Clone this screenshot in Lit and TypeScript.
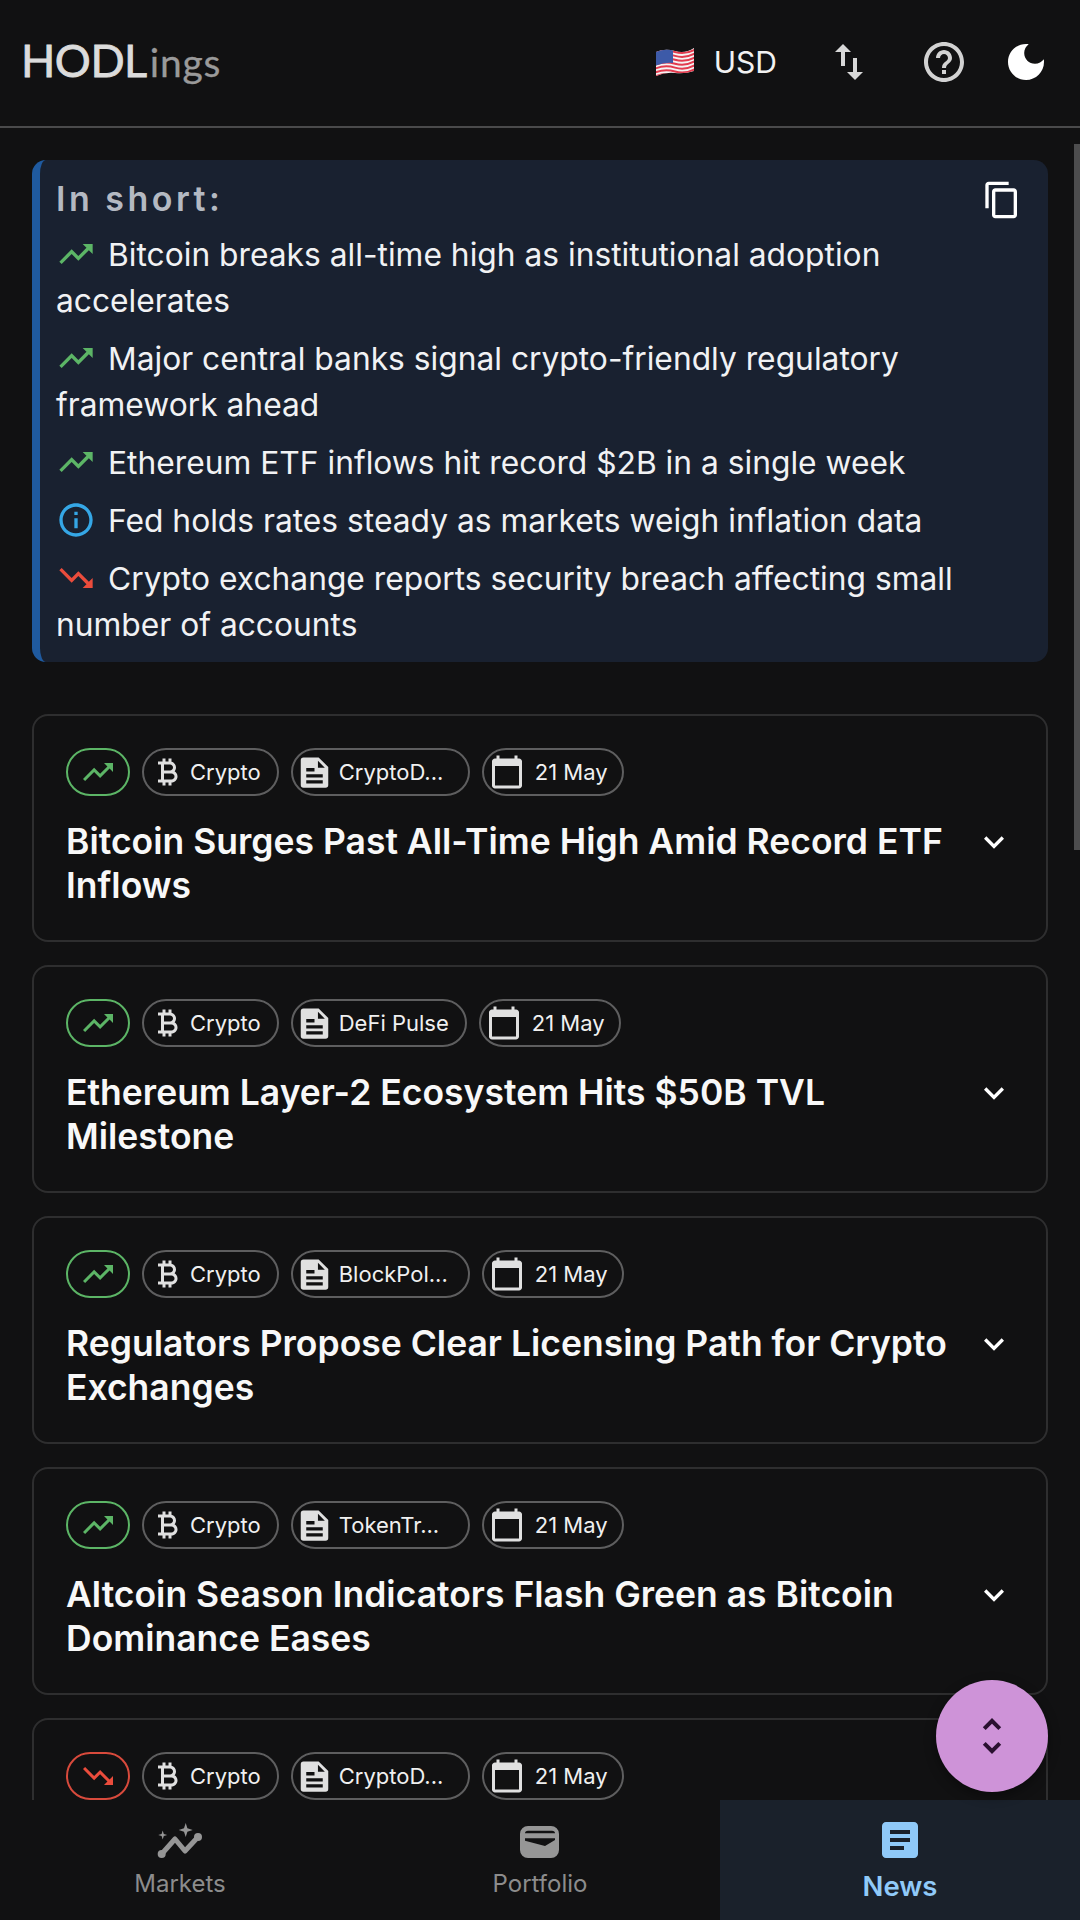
import { LitElement, css, html, svg } from 'lit';
import { customElement } from 'lit/decorators.js';

const paths = {
  up: 'M16 6l2.29 2.29-4.88 4.88-4-4L2 16.59 3.41 18l6-6 4 4 6.3-6.29L22 12V6z',
  down: 'M16 18l2.29-2.29-4.88-4.88-4 4L2 7.41 3.41 6l6 6 4-4 6.3 6.29L22 12v6z',
  info: 'M11 7h2v2h-2zm0 4h2v6h-2zm1-9C6.48 2 2 6.48 2 12s4.48 10 10 10 10-4.48 10-10S17.52 2 12 2zm0 18c-4.41 0-8-3.59-8-8s3.59-8 8-8 8 3.59 8 8-3.59 8-8 8z',
  copy: 'M16 1H4c-1.1 0-2 .9-2 2v14h2V3h12V1zm3 4H8c-1.1 0-2 .9-2 2v14c0 1.1.9 2 2 2h11c1.1 0 2-.9 2-2V7c0-1.1-.9-2-2-2zm0 16H8V7h11v14z',
  swap: 'M16 17.01V10h-2v7.01h-3L15 21l4-3.99h-3zM9 3L5 6.99h3V14h2V6.99h3L9 3z',
  help: 'M11 18h2v-2h-2v2zm1-16C6.48 2 2 6.48 2 12s4.48 10 10 10 10-4.48 10-10S17.52 2 12 2zm0 18c-4.41 0-8-3.59-8-8s3.59-8 8-8 8 3.59 8 8-3.59 8-8 8zm0-14c-2.21 0-4 1.79-4 4h2c0-1.1.9-2 2-2s2 .9 2 2c0 2-3 1.75-3 5h2c0-2.25 3-2.5 3-5 0-2.21-1.79-4-4-4z',
  moon: 'M12 3c-4.97 0-9 4.03-9 9s4.03 9 9 9 9-4.03 9-9c0-.46-.04-.92-.1-1.36-.98 1.37-2.58 2.26-4.4 2.26-2.98 0-5.4-2.42-5.4-5.4 0-1.81.89-3.42 2.26-4.4-.44-.06-.9-.1-1.36-.1z',
  btc: 'M17.06 11.57c.59-.69.94-1.59.94-2.57 0-1.86-1.27-3.43-3-3.87V3h-2v2h-2V3H9v2H6v2h2v10H6v2h3v2h2v-2h2v2h2v-2c2.21 0 4-1.79 4-4 0-1.45-.78-2.73-1.94-3.43zM10 7h4c1.1 0 2 .9 2 2s-.9 2-2 2h-4V7zm5 10h-5v-4h5c1.1 0 2 .9 2 2s-.9 2-2 2z',
  doc: 'M4 1h11l7 7v13a2 2 0 0 1-2 2H4a2 2 0 0 1-2-2V3a2 2 0 0 1 2-2zM6 20h12v-2.4H6zM6 15.6h12v-2.4H6zM6 11.2h6V8.8H6zM14.5 8.5h5l-5-5z',
  cal: 'M20 3h-1V1h-2v2H7V1H5v2H4c-1.1 0-2 .9-2 2v16c0 1.1.9 2 2 2h16c1.1 0 2-.9 2-2V5c0-1.1-.9-2-2-2zm0 18H4V8h16v13z',
  more: 'M16.59 8.59L12 13.17 7.41 8.59 6 10l6 6 6-6z',
  unfold: 'M12 5.83L15.17 9l1.41-1.41L12 3 7.41 7.59 8.83 9 12 5.83zm0 12.34L8.83 15l-1.41 1.41L12 21l4.59-4.59L15.17 15 12 18.17z',
  article: 'M19 3H5c-1.1 0-2 .9-2 2v14c0 1.1.9 2 2 2h14c1.1 0 2-.9 2-2V5c0-1.1-.9-2-2-2zm-5 14H7v-2h7v2zm3-4H7v-2h10v2zm0-4H7V7h10v2z',
};

const icon = (d: string, cls: string) =>
  html`<svg class=${cls} viewBox="0 0 24 24" fill="currentColor" fill-rule="evenodd"><path d=${d}></path></svg>`;

const summary = [
  { kind: 'up', text: 'Bitcoin breaks all-time high as institutional adoption accelerates' },
  { kind: 'up', text: 'Major central banks signal crypto-friendly regulatory framework ahead' },
  { kind: 'up', text: 'Ethereum ETF inflows hit record $2B in a single week' },
  { kind: 'info', text: 'Fed holds rates steady as markets weigh inflation data' },
  { kind: 'down', text: 'Crypto exchange reports security breach affecting small number of accounts' },
];

const news = [
  { trend: 'up', source: 'CryptoD...', title: 'Bitcoin Surges Past All-Time High Amid Record ETF Inflows' },
  { trend: 'up', source: 'DeFi Pulse', title: 'Ethereum Layer-2 Ecosystem Hits $50B TVL Milestone' },
  { trend: 'up', source: 'BlockPol...', title: 'Regulators Propose Clear Licensing Path for Crypto Exchanges' },
  { trend: 'up', source: 'TokenTr...', title: 'Altcoin Season Indicators Flash Green as Bitcoin Dominance Eases' },
  { trend: 'down', source: 'CryptoD...', title: '' },
];

@customElement('app-root')
export class AppRoot extends LitElement {
  static styles = css`
    :host {
      display: block;
      width: 1080px;
      height: 1920px;
      background: #111112;
      color: #fff;
      font-family: Inter, 'Noto Sans', sans-serif;
      overflow: hidden;
      position: relative;
    }
    .page { display: flex; flex-direction: column; height: 1920px; }

    header {
      flex: none;
      box-sizing: border-box;
      height: 128px;
      border-bottom: 2px solid #4a4a4b;
      display: flex;
      align-items: center;
      padding: 0 30px 0 21px;
    }
    .logo {
      font-family: Lato, sans-serif;
      font-size: 45px;
      font-weight: 400;
      color: #dcdcdc;
      -webkit-text-stroke: 0.8px #dcdcdc;
      letter-spacing: -0.5px;
      margin-top: -7px;
    }
    .logo span {
      font-size: 39px;
      color: #9a9a9a;
      -webkit-text-stroke: 0.3px #9a9a9a;
      margin-left: 3px;
      letter-spacing: 0.8px;
    }
    .actions { margin-left: auto; display: flex; align-items: center; }
    .flag { width: 40px; height: 30px; display: block; margin-top: -2px; }
    .usd { font-size: 30px; margin: -3px 0 0 19px; color: #f2f2f2; }
    .actions > svg:not(.flag) { width: 48px; height: 48px; margin-top: -2px; }
    .actions .swap { margin-left: 48px; color: #d8d8d8; }
    .actions .help { margin-left: 47px; color: #d2d2d2; }
    .actions .moon { margin-left: 34px; color: #fff; }

    main {
      flex: 1;
      min-height: 0;
      overflow: hidden;
      padding: 32px 32px 0;
      display: flex;
      flex-direction: column;
      gap: 23px;
    }

    .summary {
      flex: none;
      position: relative;
      background: #192130;
      border-left: 8px solid #1f5a9f;
      border-radius: 14px;
      padding: 19px 16px 14px 16px;
      margin-bottom: 29px;
    }
    .summary h2 { margin: 0 0 13px; font-size: 34px; line-height: 40px; font-weight: 600; letter-spacing: 3.5px; color: #b4b9c2; }
    .summary p { margin: 0 0 12px; font-size: 31.75px; line-height: 46px; color: #f1f2f4; }
    .summary p:last-child { margin-bottom: 0; }
    .bullet { width: 40px; height: 40px; vertical-align: -8px; margin-right: 12px; }
    .bullet.up { color: #5cb566; }
    .bullet.down { color: #eb4c3c; }
    .bullet.info { color: #35a7e6; }
    .copy { position: absolute; top: 20px; right: 26px; width: 40px; height: 40px; color: #fff; }

    .card {
      flex: none;
      border: 2px solid #2e2e2f;
      border-radius: 16px;
      padding: 32px;
      display: flex;
      flex-direction: column;
      gap: 24px;
    }
    .chips { display: flex; gap: 12px; }
    .chip {
      height: 48px;
      box-sizing: border-box;
      border: 2px solid #5e5e5f;
      border-radius: 24px;
      display: flex;
      align-items: center;
      gap: 5px;
      padding: 0 16px 0 5px;
      font-size: 22px;
      color: #f0f0f0;
      white-space: nowrap;
    }
    .chip svg { width: 36px; height: 36px; color: #e0e0e0; flex: none; }
    .chip .src-icon { width: 33px; height: 33px; margin-right: 3px; }
    .chip .date-icon { margin-right: 5px; }
    .date { padding-right: 14px; }
    .clip { width: 113px; }
    .trend { width: 64px; padding: 0; justify-content: center; }
    .trend.up { border-color: #5cb566; }
    .trend.up svg { color: #5cb566; }
    .trend.down { border-color: #d84a3c; }
    .trend.down svg { color: #eb4c3c; }

    .head { display: flex; align-items: flex-start; }
    .head h3 { margin: 0; flex: 1; font-size: 35.5px; line-height: 44px; font-weight: 600; color: #f8f8f8; }
    .chev { width: 40px; height: 40px; margin: 2px 0 0 20px; color: #fff; flex: none; }

    .fab {
      position: absolute;
      left: 936px;
      top: 1680px;
      width: 112px;
      height: 112px;
      border-radius: 50%;
      background: #ce93d8;
      box-shadow: 0 4px 12px rgba(0, 0, 0, 0.4);
      display: flex;
      align-items: center;
      justify-content: center;
      color: #2a1030;
    }
    .fab svg { width: 48px; height: 48px; }
    .scroll { position: absolute; left: 1074px; top: 144px; width: 6px; height: 706px; background: #4d4d4e; }

    nav {
      flex: none;
      height: 120px;
      display: grid;
      grid-template-columns: repeat(3, 1fr);
      background: #111112;
    }
    .tab { display: flex; flex-direction: column; align-items: center; padding-top: 16px; color: #8c8c8c; font-size: 24px; line-height: 30px; gap: 5px; }
    .tab svg { width: 48px; height: 48px; display: block; color: #969696; }
    .tab.active { background: #1a212b; color: #90caf9; font-size: 27.5px; font-weight: 600; gap: 7px; }
    .tab.active svg { color: #90caf9; }
  `;

  private markets() {
    return html`<svg viewBox="0 0 48 48" fill="currentColor">
      ${svg`<path d="M5.7 38 L19 23 L29 35 L42 21" fill="none" stroke="currentColor" stroke-width="5" stroke-linecap="round" stroke-linejoin="round"></path>
      <circle cx="5.7" cy="38" r="4"></circle><circle cx="42" cy="21" r="4"></circle>
      <path d="M29.7 7 L31.4 12.3 L36.7 14 L31.4 15.7 L29.7 21 L28 15.7 L22.7 14 L28 12.3Z"></path>
      <path d="M6.7 14.5 L7.8 17.9 L11.2 19 L7.8 20.1 L6.7 23.5 L5.6 20.1 L2.2 19 L5.6 17.9Z"></path>`}
    </svg>`;
  }

  private wallet() {
    return html`<svg viewBox="0 0 48 48" fill="currentColor">
      ${svg`<path fill-rule="evenodd" d="M12 10 H35 A8 8 0 0 1 43 18 V34 A8 8 0 0 1 35 42 H12 A8 8 0 0 1 4 34 V18 A8 8 0 0 1 12 10Z
      M9 17.3 H39 Q39 14.7 36 14.7 H12 Q9 14.7 9 17.3Z
      M9 22.3 H39 V24 L29 30 L9 24.7Z"></path>`}
    </svg>`;
  }

  private flag() {
    const stripes = [0, 1, 2, 3, 4, 5, 6].map(
      (i) => svg`<path d="M0 ${6 + i * 3.9} q10 -4 20 -1 t20 -2.5" fill="none" stroke="#e23b4e" stroke-width="2"></path>`,
    );
    return html`<svg class="flag" viewBox="0 0 40 30">
      ${svg`<defs><clipPath id="wave"><path d="M1 5 Q10 1 20 4 T39 1 V24 Q30 27 20 26 T1 29Z"></path></clipPath></defs>
      <g clip-path="url(#wave)"><rect width="40" height="30" fill="#f4f4f4"></rect>${stripes}
      <path d="M0 0 H18 V16 Q9 15 0 19Z" fill="#3d5aa8"></path></g>`}
    </svg>`;
  }

  render() {
    return html`
      <div class="page">
        <header>
          <div class="logo">HODL<span>ings</span></div>
          <div class="actions">
            ${this.flag()}
            <div class="usd">USD</div>
            ${icon(paths.swap, 'swap')} ${icon(paths.help, 'help')} ${icon(paths.moon, 'moon')}
          </div>
        </header>
        <main>
          <section class="summary">
            ${icon(paths.copy, 'copy')}
            <h2>In short:</h2>
            ${summary.map(
              (s) => html`<p>${icon(paths[s.kind as 'up'], `bullet ${s.kind}`)}${s.text}</p>`,
            )}
          </section>
          ${news.map(
            (n) => html`<article class="card">
              <div class="chips">
                <div class="chip trend ${n.trend}">${icon(paths[n.trend as 'up'], '')}</div>
                <div class="chip">${icon(paths.btc, '')}Crypto</div>
                <div class="chip">
                  ${icon(paths.doc, 'src-icon')}
                  <span class=${n.source.endsWith('...') ? 'clip' : ''}>${n.source}</span>
                </div>
                <div class="chip date">${icon(paths.cal, 'date-icon')}21 May</div>
              </div>
              <div class="head">
                <h3>${n.title}</h3>
                ${icon(paths.more, 'chev')}
              </div>
            </article>`,
          )}
        </main>
        <nav>
          <div class="tab">${this.markets()}Markets</div>
          <div class="tab">${this.wallet()}Portfolio</div>
          <div class="tab active">${icon(paths.article, '')}News</div>
        </nav>
      </div>
      <div class="scroll"></div>
      <div class="fab">${icon(paths.unfold, '')}</div>
    `;
  }
}
